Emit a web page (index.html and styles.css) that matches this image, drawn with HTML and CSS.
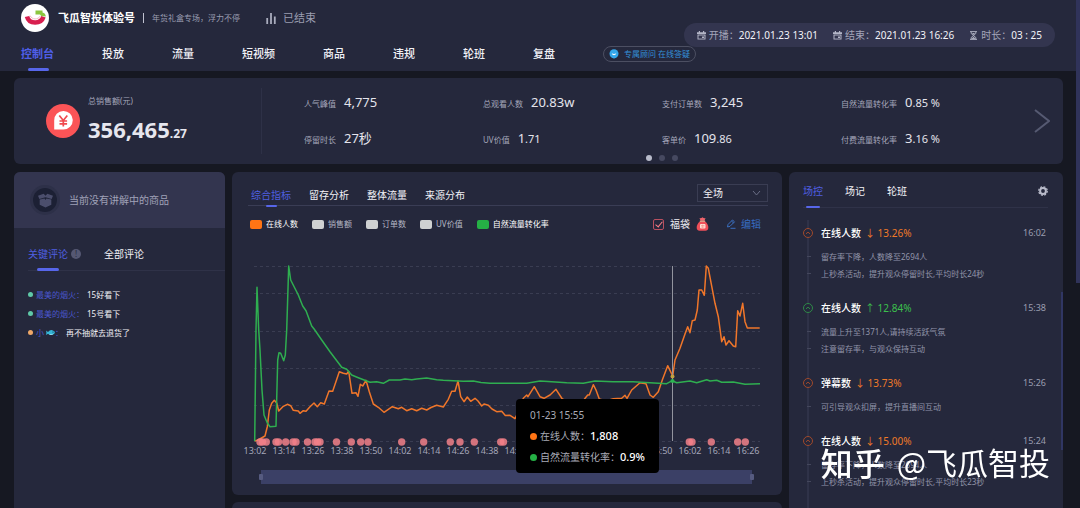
FILE: index.html
```html
<!DOCTYPE html>
<html lang="zh-CN">
<head>
<meta charset="utf-8">
<title>飞瓜智投</title>
<link rel="stylesheet" href="styles.css">
</head>
<body>
<header class="header">
  <div class="brand">
    <svg class="brand-logo" viewBox="0 0 28 28" aria-hidden="true">
      <circle cx="14" cy="14" r="14" fill="#fff"/>
      <path d="M6 12.500C8 20.500 20 20.500 22.500 12.800" fill="none" stroke="#d81f4f" stroke-width="4.600"/>
      <path d="M9 11.500C11 16 17 16 19.500 11.800" fill="none" stroke="#f5b8c4" stroke-width="1"/>
      <path d="M14.500 6.500H21.500V8.500Q24.500 9 24.800 12.500L20.300 12L19 10.500H14.500Z" fill="#8cc63f"/>
    </svg>
    <h1 class="brand-name">飞瓜智投体验号</h1>
    <span class="brand-rule"></span>
    <span class="brand-note">年货礼盒专场，浮力不停</span>
    <svg class="bars" viewBox="0 0 10 11" aria-hidden="true"><path d="M1.200 5V11M5 0V11M8.800 3.500V11" stroke="#a9acbd" stroke-width="1.800"/></svg>
    <span class="state">已结束</span>
  </div>
  <nav class="nav">
    <a class="nav-link active" href="#">控制台</a>
    <a class="nav-link" href="#">投放</a>
    <a class="nav-link" href="#">流量</a>
    <a class="nav-link" href="#">短视频</a>
    <a class="nav-link" href="#">商品</a>
    <a class="nav-link" href="#">违规</a>
    <a class="nav-link" href="#">轮班</a>
    <a class="nav-link" href="#">复盘</a>
    <button class="advisor" type="button">
      <svg class="advisor-icon" viewBox="0 0 10 10" aria-hidden="true"><circle cx="5" cy="4.700" r="4.500" fill="#35a8ec"/><path d="M4 8L5 10L6 8Z" fill="#35a8ec"/><path d="M2.800 4.200C3.200 6.800 6.800 6.800 7.200 4.200Q5 5.800 2.800 4.200Z" fill="#fff"/></svg>
      <span>专属顾问 在线答疑</span>
    </button>
  </nav>
  <div class="times">
    <span class="time"><svg class="time-icon" viewBox="0 0 9 9" aria-hidden="true"><path d="M0 1.200H1.800V0H3V1.200H6V0H7.200V1.200H9V3H0ZM.5 3.600H8.500V8.500H.5Z" fill="#b4b6c8"/><path d="M1.500 4.500H7.500V7.600H1.500Z" fill="#33354f"/><path d="M5 5.500H7V7H5Z" fill="#b4b6c8"/></svg>开播：<b>2021.01.23 13:01</b></span>
    <span class="time"><svg class="time-icon" viewBox="0 0 9 9" aria-hidden="true"><path d="M0 1.200H1.800V0H3V1.200H6V0H7.200V1.200H9V3H0ZM.5 3.600H8.500V8.500H.5Z" fill="#b4b6c8"/><path d="M1.500 4.500H7.500V7.600H1.500Z" fill="#33354f"/><path d="M5 5.500H7V7H5Z" fill="#b4b6c8"/></svg>结束：<b>2021.01.23 16:26</b></span>
    <span class="time"><svg class="time-icon" viewBox="0 0 9 9" aria-hidden="true"><path d="M1 .6H8M1 8.400H8M2.200 1V2.500L6.800 6.500V8M6.800 1V2.500L2.200 6.500V8" fill="none" stroke="#a9acbd"/><path d="M2.500 8L4.500 5.500L6.500 8ZM3 2H6L4.500 4Z" fill="#a9acbd"/></svg>时长：<b>03 : 25</b></span>
  </div>
</header>

<main class="main">
  <section class="summary">
    <div class="total">
      <svg class="total-icon" viewBox="0 0 34 34" aria-hidden="true">
        <circle cx="17" cy="17" r="17" fill="#fb5457"/>
        <path d="M8.200 25.500V16.500A9.300 9.300 0 1 1 17.500 25.500Z" fill="#fff"/>
        <path d="M13.300 11.500L17.300 16.500L21.300 11.500M17.300 16.500V22.500M13.500 17H21.100M13.500 19.800H21.100" fill="none" stroke="#f0494e" stroke-width="1.700"/>
      </svg>
      <div class="total-text">
        <span class="caption">总销售额(元)</span>
        <strong class="total-value">356,465<small>.27</small></strong>
      </div>
    </div>
    <dl class="metrics">
      <div class="metric"><dt>人气峰值</dt><dd>4,775</dd></div>
      <div class="metric"><dt>总观看人数</dt><dd>20.83w</dd></div>
      <div class="metric"><dt>支付订单数</dt><dd>3,245</dd></div>
      <div class="metric"><dt>自然流量转化率</dt><dd>0<small>.85 %</small></dd></div>
      <div class="metric"><dt>停留时长</dt><dd>27秒</dd></div>
      <div class="metric"><dt>UV价值</dt><dd>1<small>.71</small></dd></div>
      <div class="metric"><dt>客单价</dt><dd>109<small>.86</small></dd></div>
      <div class="metric"><dt>付费流量转化率</dt><dd>3<small>.16 %</small></dd></div>
    </dl>
    <button class="next" type="button" aria-label="下一页"><svg viewBox="0 0 16 24"><path d="M1 1L15 12L1 23" fill="none" stroke="#565a72" stroke-width="2"/></svg></button>
    <div class="pager"><i class="on"></i><i></i><i></i></div>
  </section>

  <div class="columns">
    <section class="panel comments">
      <div class="product">
        <span class="product-icon"><svg viewBox="0 0 18 16" aria-hidden="true"><path d="M1 3L7 .8L9 3L11 .8L17 3L15.500 6.300L9 4.500L2.500 6.300ZM2.800 7L8 5.800L9 7.500L10 5.800L15.200 7V12.500L9 15.500L2.800 12.500Z" fill="#4b4e6c"/></svg></span>
        <span>当前没有讲解中的商品</span>
      </div>
      <div class="comment-tabs">
        <button class="tab active" type="button">关键评论</button>
        <span class="help">!</span>
        <button class="tab" type="button">全部评论</button>
      </div>
      <ul class="comment-list">
        <li><i class="dot teal"></i><span class="user">最美的烟火：</span>15好看下</li>
        <li><i class="dot teal"></i><span class="user">最美的烟火：</span>15号看下</li>
        <li><i class="dot peach"></i><span class="user">小<svg class="fish" viewBox="0 0 9 7" aria-label="鱼"><path d="M0 1.500L2 3Q5-.8 8.500 2.500Q9.500 4 7.500 5.200Q4.500 7.200 2 4.800L0 6Q.8 3.800 0 1.500Z" fill="#36b7d8"/><path d="M3 5Q6 5.800 8 4.500Q5 7.200 3 5Z" fill="#b9eef8"/><circle cx="7" cy="3" r=".6" fill="#12354a"/></svg>：</span>再不抽就去退货了</li>
      </ul>
    </section>

    <div class="center">
      <section class="panel chart-panel">
        <div class="chart-head">
          <div class="tabs">
            <button class="tab active" type="button">综合指标</button>
            <button class="tab" type="button">留存分析</button>
            <button class="tab" type="button">整体流量</button>
            <button class="tab" type="button">来源分布</button>
          </div>
          <div class="select-box">
            <select class="select" aria-label="场次"><option>全场</option></select>
            <svg viewBox="0 0 9 6" aria-hidden="true"><path d="M1 1L4.500 5L8 1" fill="none" stroke="#6a6e86"/></svg>
          </div>
        </div>
        <div class="toolbar">
          <ul class="legend">
            <li class="on"><i class="swatch orange"></i>在线人数</li>
            <li><i class="swatch"></i>销售额</li>
            <li><i class="swatch"></i>订单数</li>
            <li><i class="swatch"></i>UV价值</li>
            <li class="on"><i class="swatch green"></i>自然流量转化率</li>
          </ul>
          <label class="lucky"><input class="check" type="checkbox" checked>福袋
            <svg class="bag" viewBox="0 0 13 14" aria-hidden="true"><path d="M3.500 1Q5 1.500 6.500 .3Q8 1.500 9.500 1L8.500 3.800H4.500Z" fill="#f0646c"/><path d="M4 4.500H9Q12.500 7 12.300 11Q12 13.700 9.500 13.700H3.500Q1 13.700 .7 11Q.5 7 4 4.500Z" fill="#ee4f59"/><path d="M3.800 4.200H9.200" stroke="#ffc9a0"/><rect x="4" y="7" width="5.500" height="4.500" rx="1" fill="#ffe0d8"/><path d="M5 8.500H8.500M5 10H8.500M6.700 7.500V11" stroke="#f08c80" stroke-width=".6"/></svg>
          </label>
          <button class="edit" type="button"><svg viewBox="0 0 10 10" aria-hidden="true"><path d="M1.500 8L2 5.500L6.500 1L8.500 2.800L4 7.300ZM4.500 9.300H9.500M5.500 2L7.500 3.900" fill="none" stroke="#3a6fc0"/></svg>编辑</button>
        </div>
        <div class="chart">
          <svg class="plot" viewBox="248 250 520 210">
            <path class="grid" d="M254 266.500H760M254 293.500H760M254 331.500H760M254 368.500H760M254 405.500H760M254 441.500H760"/>
            <path class="line orange-line" d="M254.700 441L258 440L265 436L267.300 426.700L269.300 410L271.700 403.300L274.300 400.300L276.700 403L278.700 411L283.300 406.300L287.300 404.300L290.700 405.700L293.300 410.300L298.300 411L300 413.300L303.300 410.700L306 411.300L310 406.700L314 403L317.300 406.700L320.700 402.700L324.300 404L329 391L332.700 391.300L339.300 371.700L343.300 373.300L346.700 374L348.700 371.300L352 393.300L356 392.700L358 396.300L360.300 384.300L362.700 386L366 380.300L369.300 391.700L373.300 404L378.300 407.300L384 412.300L392.300 406.700L398.300 408.700L401.700 407.300L406.700 410.700L411.700 408.700L416.700 410.700L421.700 408.300L426.700 410L431 407.500L436.700 405.300L443.300 407L448.300 399.300L451.700 391.300L455 391.300L458 381L460.700 396.700L464 401.700L467.300 397L470.700 401.300L475 398.300L478 401L481.700 406L484 404L488.300 405.300L492 409L496.700 411.700L501.700 411.300L505.300 415.500L510 415.300L515 418.700L519 410L523.300 398.300L526.700 395L528 396.700L534.300 386.700L540 396.700L544 398.300L550 395L556 389.300L562.300 399L575 405L584.300 399.300L587.700 395L589.300 395L593.300 384.700L596 390L599.300 399L606 401L613.300 398.700L621.700 398.300L625 395.300L627 398.300L631.700 390L640 382.700L646 383.700L650 395L653.300 397.300L658.300 391.700L662.300 380L667.700 365.700L672.700 376L675 360L680 348.300L685 334L687.700 326.700L690 332.700L692.300 320.700L695 320L697.300 310L699 290L701.700 290L704.300 295.300L706.300 266L708.300 268.300L715 303.300L718.300 316.700L721.700 341.700L724 336.700L726 345L729 340.700L733.300 346L735.700 346.700L737.700 310.700L740 316L742.700 303.300L745 321.700L747.300 328L759.700 328"/>
            <path class="line green-line" d="M254.700 441L256 330L257 287.300L258.700 330L260 350L262 390L264 415L267.300 423L270 426.700L276 426.300L277.700 360L279 352.700L280.700 353.300L283.700 360.700L285.300 355L286.700 330L288.700 266L290.700 280L298.300 295L302.700 306L306 310.700L311.700 326L314.300 329.300L321.700 340L330 351.700L341.700 367.300L346.700 369.300L351.700 375L358.300 377.700L370 382.300L376.700 381.700L383.300 383.300L389.300 380L400 380L405 379L411.700 379.700L416.700 379L426.700 378L436.700 379.700L443.300 380.300L463.300 381.300L473.300 381L481 382.500L490 383.300L526.700 383.300L540 381L548 381.500L566.700 382.700L583.300 383.300L595 381L613 381.700L633 381.700L666.700 383.700L672.300 380.700L676.700 382.700L690 381L696.700 382.700L706.700 379.700L710 381L716.700 380.300L721.700 382.300L733.300 382L745 384.300L760 383.700"/>
            <path class="cursor" d="M672.500 266V441"/>
            <circle cx="672.500" cy="376.500" r="2" fill="#c0a040"/><circle cx="672.500" cy="381" r="2" fill="#2db453"/>
            <g class="events">
              <circle cx="260" cy="442" r="3.700"/><circle cx="262.500" cy="442" r="3.700"/><circle cx="266.300" cy="442" r="3.700"/><circle cx="276" cy="442" r="3.700"/><circle cx="278.500" cy="442" r="3.700"/><circle cx="285.700" cy="442" r="3.700"/><circle cx="293" cy="442" r="3.700"/><circle cx="296" cy="442" r="3.700"/><circle cx="307.500" cy="442" r="3.700"/><circle cx="315" cy="442" r="3.700"/><circle cx="317.500" cy="442" r="3.700"/><circle cx="320" cy="442" r="3.700"/><circle cx="336.500" cy="442" r="3.700"/><circle cx="351.300" cy="442" r="3.700"/><circle cx="360.700" cy="442" r="3.700"/><circle cx="368" cy="442" r="3.700"/><circle cx="401.700" cy="442" r="3.700"/><circle cx="423.700" cy="442" r="3.700"/><circle cx="450.300" cy="442" r="3.700"/><circle cx="460" cy="442" r="3.700"/><circle cx="474.300" cy="442" r="3.700"/><circle cx="500.700" cy="442" r="3.700"/><circle cx="503.500" cy="442" r="3.700"/><circle cx="689.300" cy="442" r="3.700"/><circle cx="692" cy="442" r="3.700"/><circle cx="711.300" cy="442" r="3.700"/><circle cx="737.700" cy="442" r="3.700"/><circle cx="745.300" cy="442" r="3.700"/>
            </g>
            <g class="axis">
              <text x="255" y="454">13:02</text><text x="284" y="454">13:14</text><text x="313" y="454">13:26</text><text x="342" y="454">13:38</text><text x="371" y="454">13:50</text><text x="400" y="454">14:02</text><text x="429" y="454">14:14</text><text x="458" y="454">14:26</text><text x="487" y="454">14:38</text><text x="516" y="454">14:50</text><text x="661" y="454">15:50</text><text x="690" y="454">16:02</text><text x="719" y="454">16:14</text><text x="748" y="454">16:26</text>
            </g>
          </svg>
          <div class="tooltip">
            <div>01-23 15:55</div>
            <div><i class="dot orange"></i>在线人数：<b>1,808</b></div>
            <div><i class="dot green"></i>自然流量转化率：<b>0.9%</b></div>
          </div>
        </div>
        <div class="range"><i class="grip"></i><i class="grip"></i></div>
      </section>
      <section class="panel below"></section>
    </div>

    <section class="panel control">
      <div class="control-head">
        <div class="tabs">
          <button class="tab active" type="button">场控</button>
          <button class="tab" type="button">场记</button>
          <button class="tab" type="button">轮班</button>
        </div>
        <button class="gear" type="button" aria-label="设置"><svg viewBox="0 0 10 10"><circle cx="5" cy="5" r="2.900" fill="none" stroke="#b9bbca" stroke-width="2"/><circle cx="5" cy="5" r="4.300" fill="none" stroke="#b9bbca" stroke-width="1.200" stroke-dasharray="1.900 1.477"/></svg></button>
      </div>
      <ol class="timeline">
        <li class="event down">
          <div class="event-head"><svg class="mark" viewBox="0 0 10 10" aria-hidden="true"><circle cx="5" cy="5" r="4.500"/><path d="M3 5.800L5 4.200L7 5.800"/></svg><h2>在线人数</h2><span class="change">↓ 13.26%</span><time>16:02</time></div>
          <p>留存率下降，人数降至2694人</p><p>上秒杀活动，提升观众停留时长,平均时长24秒</p>
        </li>
        <li class="event up">
          <div class="event-head"><svg class="mark" viewBox="0 0 10 10" aria-hidden="true"><circle cx="5" cy="5" r="4.500"/><path d="M3 5.800L5 4.200L7 5.800"/></svg><h2>在线人数</h2><span class="change">↑ 12.84%</span><time>15:38</time></div>
          <p>流量上升至1371人,请持续活跃气氛</p><p>注意留存率，与观众保持互动</p>
        </li>
        <li class="event down">
          <div class="event-head"><svg class="mark" viewBox="0 0 10 10" aria-hidden="true"><circle cx="5" cy="5" r="4.500"/><path d="M3 5.800L5 4.200L7 5.800"/></svg><h2>弹幕数</h2><span class="change">↓ 13.73%</span><time>15:26</time></div>
          <p>可引导观众扣屏，提升直播间互动</p>
        </li>
        <li class="event down">
          <div class="event-head"><svg class="mark" viewBox="0 0 10 10" aria-hidden="true"><circle cx="5" cy="5" r="4.500"/><path d="M3 5.800L5 4.200L7 5.800"/></svg><h2>在线人数</h2><span class="change">↓ 15.00%</span><time>15:24</time></div>
          <p>留存率下降，人数降至2694人</p><p>上秒杀活动，提升观众停留时长,平均时长23秒</p>
        </li>
      </ol>
      <i class="panel-scroll"></i>
    </section>
  </div>
</main>
<div class="watermark"><b>知乎</b><span>@飞瓜智投</span></div>
<i class="page-scroll"></i>
</body>
</html>
```
FILE: styles.css
```css
* { box-sizing: border-box; }
html, body { height: 100%; }
body {
  margin: 0;
  overflow: hidden;
  display: flex;
  flex-direction: column;
  background: #161822;
  color: #f0f0f5;
  font: 10px/16px "Noto Sans", "Noto Sans CJK SC", sans-serif;
}
h1, h2, p, ul, ol, dl, dd { margin: 0; padding: 0; }
ul, ol { list-style: none; }
button, select, input { font: inherit; color: inherit; margin: 0; }
button { padding: 0; border: 0; background: none; }
svg { display: block; flex: none; }
i { display: block; }

/* Header */
.header { position: relative; flex: none; padding-left: 21px; background: #25283c; }
.brand { display: flex; align-items: center; height: 36px; }
.brand-logo { width: 28px; height: 28px; margin-right: 9px; }
.brand-name { font-size: 11px; font-weight: 700; color: #fff; }
.brand-rule { width: 1px; height: 10px; margin: 0 8px; background: #c0c2d0; }
.brand-note { font-size: 8px; color: #9a9db0; }
.bars { width: 10px; height: 11px; margin: 0 7px 0 26px; }
.state { font-size: 11px; color: #9a9db0; }
.nav { display: flex; align-items: center; gap: 48px; height: 35px; font-size: 11px; }
.nav-link { position: relative; line-height: 34px; color: #f2f2f7; text-decoration: none; font-weight: 500; }
.nav-link.active { color: #4f5fe8; font-weight: 700; }
.nav-link.active::after {
  content: ""; position: absolute; left: 7px; right: 5px; bottom: 0;
  height: 3px; border-radius: 2px; background: #5766ea;
}
.advisor {
  display: flex; align-items: center; gap: 5px; height: 16px; padding: 0 5px;
  border: 1px solid #4c4f62; border-radius: 8px;
  font-size: 8px; line-height: 12px; color: #3490d8; white-space: nowrap;
}
.advisor-icon { width: 10px; height: 10px; }
.times {
  position: absolute; right: 25px; top: 23px;
  display: flex; align-items: center; gap: 15px; height: 24px; padding: 0 13px;
  border-radius: 12px; background: #33354f; color: #a4a6ba;
}
.time { display: flex; align-items: center; }
.time b { font-weight: 400; color: #f2f2f7; }
.time-icon { width: 9px; height: 9px; margin-right: 3px; }

/* Summary */
.main { flex: 1; display: flex; flex-direction: column; gap: 8px; min-height: 0; padding: 7px 17px 0 14px; }
.summary { position: relative; flex: none; display: flex; align-items: center; height: 86px; border-radius: 6px; background: #25283c; }
.total { display: flex; align-items: center; gap: 8px; width: 248px; height: 66px; padding-left: 32px; border-right: 1px solid #2e3147; }
.total-icon { width: 34px; height: 34px; }
.total-text { display: flex; flex-direction: column; padding-top: 4px; }
.caption { font-size: 8px; color: #a4a6ba; }
.total-value { font-size: 22px; line-height: 40px; color: #e6e6ee; }
.total-value small { font-size: 12px; }
.metrics { flex: 1; display: grid; grid-template-columns: repeat(4, 1fr); row-gap: 14px; padding: 0 14px 0 42px; }
.metric { display: flex; align-items: baseline; gap: 8px; white-space: nowrap; line-height: 20px; }
.metric dt { font-size: 8px; color: #a4a6ba; }
.metric dd { font-size: 13px; color: #e4e4ec; }
.metric small { font-size: 11px; }
.next { flex: none; width: 16px; height: 24px; margin-right: 13px; }
.pager { position: absolute; left: 0; right: 0; bottom: 3px; display: flex; justify-content: center; gap: 7px; padding-left: 246px; }
.pager i { width: 6px; height: 6px; border-radius: 50%; background: #464960; }
.pager .on { background: #b9bccb; }

/* Columns */
.columns { flex: 1; min-height: 0; display: grid; grid-template-columns: 211fr 550fr 274fr; gap: 7px; }
.panel { min-width: 0; border-radius: 6px; background: #25283c; }
.comments, .control { border-radius: 6px 6px 0 0; overflow: hidden; }
.tab { position: relative; line-height: 20px; white-space: nowrap; color: #f2f2f7; }
.tab.active { color: #4f5fe0; }
.tab.active::after { content: ""; position: absolute; left: 9px; right: 9px; bottom: -7px; height: 3px; border-radius: 2px; background: #5766ea; }
.tabs { display: flex; }
.dot { flex: none; width: 5px; height: 5px; border-radius: 50%; }
.teal { background: #5fc9a8; }
.peach { background: #f0a868; }
.orange { background: #ff7414; }
.green { background: #25b045; }

.product { display: flex; align-items: center; gap: 12px; height: 56px; padding-left: 19px; background: #33354f; color: #a0a2b8; }
.product-icon { display: flex; align-items: center; justify-content: center; width: 24px; height: 24px; border-radius: 50%; background: #1c2034; box-shadow: 0 0 0 3px #2d3048; }
.product-icon svg { width: 17px; height: 15px; }
.comment-tabs { display: flex; align-items: center; margin: 16px 0 0 14px; padding-bottom: 6px; border-bottom: 1px solid #2f3248; }
.help { width: 10px; height: 10px; margin: 0 23px 0 3px; border-radius: 50%; background: #555873; color: #25283c; font-size: 8px; line-height: 10px; text-align: center; }
.comment-list { padding: 14px; font-size: 8px; line-height: 19px; }
.comment-list li { display: flex; align-items: center; }
.comment-list .dot { margin-right: 3px; }
.user { display: flex; align-items: center; margin-right: 3px; color: #4a56cc; }
.fish { width: 9px; height: 7px; margin-left: 2px; }

/* Chart */
.center { display: flex; flex-direction: column; gap: 7px; min-height: 0; min-width: 0; }
.chart-panel { flex: none; padding: 12px 14px 11px 16px; }
.chart-head { display: flex; align-items: flex-start; justify-content: space-between; height: 22px; border-bottom: 1px solid #3a3d55; }
.chart-head .tabs { gap: 18px; padding-left: 3px; }
.chart-head .tab { line-height: 22px; }
.chart-head .tab.active::after { left: 15px; right: 14px; bottom: -1px; height: 2px; }
.select-box { position: relative; width: 71px; }
.select { width: 100%; height: 18px; padding: 0 5px; appearance: none; border: 1px solid #3a3d53; border-radius: 0; background: #25283c; }
.select-box svg { position: absolute; right: 7px; top: 6px; width: 9px; height: 6px; pointer-events: none; }
.toolbar { display: flex; align-items: center; height: 36px; padding: 0 7px 0 2px; }
.legend { display: flex; gap: 14px; margin-right: auto; font-size: 8px; color: #b4b6c4; }
.legend li { display: flex; align-items: center; gap: 4px; white-space: nowrap; }
.legend .on { color: #fff; }
.swatch { width: 12px; height: 9px; border-radius: 2px; background: #cfd1d2; }
.swatch.orange { background: #ff7414; }
.swatch.green { background: #25b045; }
.lucky { display: flex; align-items: center; gap: 6px; margin-right: 17px; }
.check { position: relative; width: 11px; height: 11px; appearance: none; border: 1px solid #b85060; border-radius: 2px; }
.check:checked::after { content: ""; position: absolute; left: 3px; top: 0; width: 3px; height: 6px; border: solid #ff8088; border-width: 0 1px 1px 0; transform: rotate(40deg); }
.bag { width: 13px; height: 14px; }
.edit { display: flex; align-items: center; gap: 5px; color: #376cc0; }
.edit svg { width: 10px; height: 10px; }
.chart { position: relative; margin-top: 8px; }
.plot { width: 100%; height: auto; overflow: visible; }
.grid { fill: none; stroke: #3a3d52; stroke-dasharray: 3 3; }
.line { fill: none; stroke-width: 1.5; stroke-linejoin: round; }
.orange-line { stroke: #f0762a; }
.green-line { stroke: #2fae50; }
.cursor { stroke: #92949e; }
.events { fill: #f28088; fill-opacity: .85; }
.axis { font-size: 9px; fill: #a4a6b8; text-anchor: middle; }
.tooltip {
  position: absolute; left: 268px; top: 149px;
  display: flex; flex-direction: column; gap: 5px; padding: 8px 14px;
  border-radius: 4px; background: #000; color: #a9abb6; white-space: nowrap;
}
.tooltip div { display: flex; align-items: center; }
.tooltip .dot { width: 7px; height: 7px; margin-right: 3px; }
.tooltip b { font-weight: 500; font-size: 11px; color: #fff; }
.range { display: flex; justify-content: space-between; align-items: center; height: 14px; margin: 10px 16px 0 13px; background: #3b4066; }
.grip { width: 4px; height: 6px; margin: 0 -2px; border-radius: 1px; background: #565b80; }
.below { flex: 1; border-radius: 6px 6px 0 0; }

/* Control timeline */
.control { position: relative; padding: 9px 15px 0 14px; }
.control-head { display: flex; align-items: center; justify-content: space-between; padding-bottom: 6px; border-bottom: 1px solid #2f3248; }
.control-head .tabs { gap: 22px; }
.control-head .tab.active::after { left: 3px; right: 3px; height: 2px; }
.gear svg { width: 10px; height: 10px; }
.timeline { position: relative; padding: 16px 0 30px; }
.timeline::before { content: ""; position: absolute; left: 4px; top: 12px; bottom: 0; width: 2px; background: #2f3248; }
.event { position: relative; margin-bottom: 17px; padding-left: 18px; }
.event-head { display: flex; align-items: center; height: 18px; margin: 0 0 6px -18px; }
.mark { width: 10px; height: 10px; margin-right: 8px; fill: #25283c; stroke: #a04a2c; }
.up .mark { stroke: #2f8a48; }
.event h2 { font-size: 10px; font-weight: 500; color: #fff; }
.change { margin-left: 4px; color: #f07a28; }
.up .change { color: #3cc04c; }
.event time { margin-left: auto; padding-right: 2px; font-size: 9px; color: #9a9db0; }
.event p { position: relative; font-size: 8px; line-height: 17px; color: #9295aa; white-space: nowrap; }
.event p::before { content: ""; position: absolute; left: -14px; top: 8px; width: 4px; height: 1px; background: #44475c; }

/* Overlays */
.panel-scroll { position: absolute; right: 0; top: 120px; width: 2px; height: 158px; background: #303663; }
.page-scroll { position: fixed; right: 0; top: 0; width: 4px; height: 283px; background: #30335a; }
.watermark { position: fixed; right: 30px; bottom: 26px; display: flex; gap: 12px; font: 31px/40px "Noto Sans CJK SC", sans-serif; color: #fff; }
.watermark b { font-weight: 500; font-size: 32px; }
```
